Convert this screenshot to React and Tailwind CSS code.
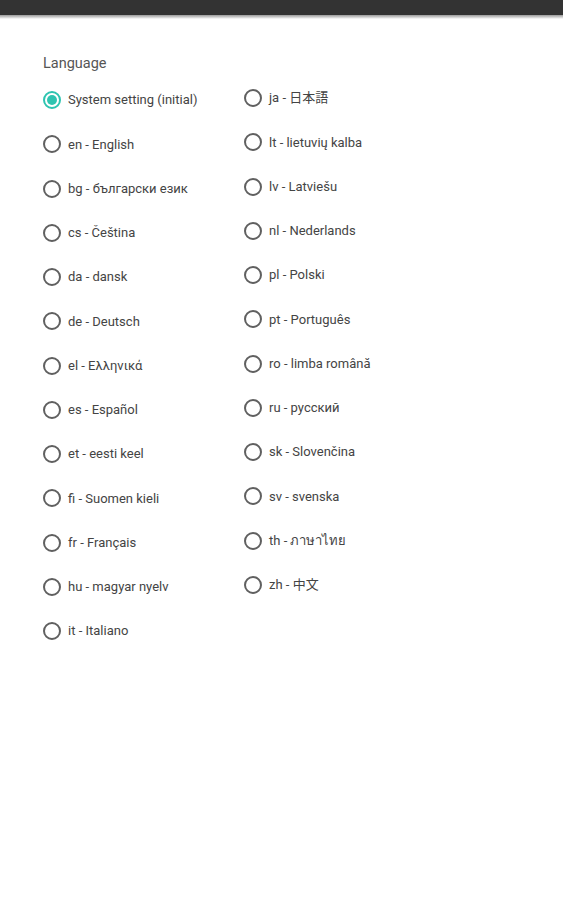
import React from "react";

const left = [
  "System setting (initial)",
  "en - English",
  "bg - български език",
  "cs - Čeština",
  "da - dansk",
  "de - Deutsch",
  "el - Ελληνικά",
  "es - Español",
  "et - eesti keel",
  "fi - Suomen kieli",
  "fr - Français",
  "hu - magyar nyelv",
  "it - Italiano",
];
const right = [
  "ja - 日本語",
  "lt - lietuvių kalba",
  "lv - Latviešu",
  "nl - Nederlands",
  "pl - Polski",
  "pt - Português",
  "ro - limba română",
  "ru - русский",
  "sk - Slovenčina",
  "sv - svenska",
  "th - ภาษาไทย",
  "zh - 中文",
];

function Row({ label, checked }) {
  return (
    <div className="flex items-center h-[44.25px]">
      <div
        className={
          "w-[18px] h-[18px] rounded-full border-2 flex items-center justify-center shrink-0 " +
          (checked ? "border-[#2ec4b0]" : "border-[#606060]")
        }
      >
        {checked && <div className="w-[10px] h-[10px] rounded-full bg-[#2ec4b0]" />}
      </div>
      <span className="ml-[7px] text-[13px] text-[#444] whitespace-nowrap">{label}</span>
    </div>
  );
}

export default function App() {
  return (
    <div
      className="w-[563px] h-[900px] bg-white flex flex-col"
      style={{ fontFamily: "Roboto, 'Noto Sans', 'Noto Sans CJK JP', sans-serif" }}
    >
      <div className="h-[15px] bg-[#333333] shrink-0" />
      <div className="h-[4px] bg-gradient-to-b from-[#9a9a9a] to-white shrink-0" />
      <div className="pl-[43px] pt-[35px]">
        <div className="text-[14.5px] text-[#555] leading-[20px]">Language</div>
        <div className="flex mt-[4px]">
          <div className="w-[201px] flex flex-col">
            {left.map((l, i) => (
              <Row key={l} label={l} checked={i === 0} />
            ))}
          </div>
          <div className="flex flex-col -mt-[2px]">
            {right.map((l) => (
              <Row key={l} label={l} />
            ))}
          </div>
        </div>
      </div>
    </div>
  );
}
